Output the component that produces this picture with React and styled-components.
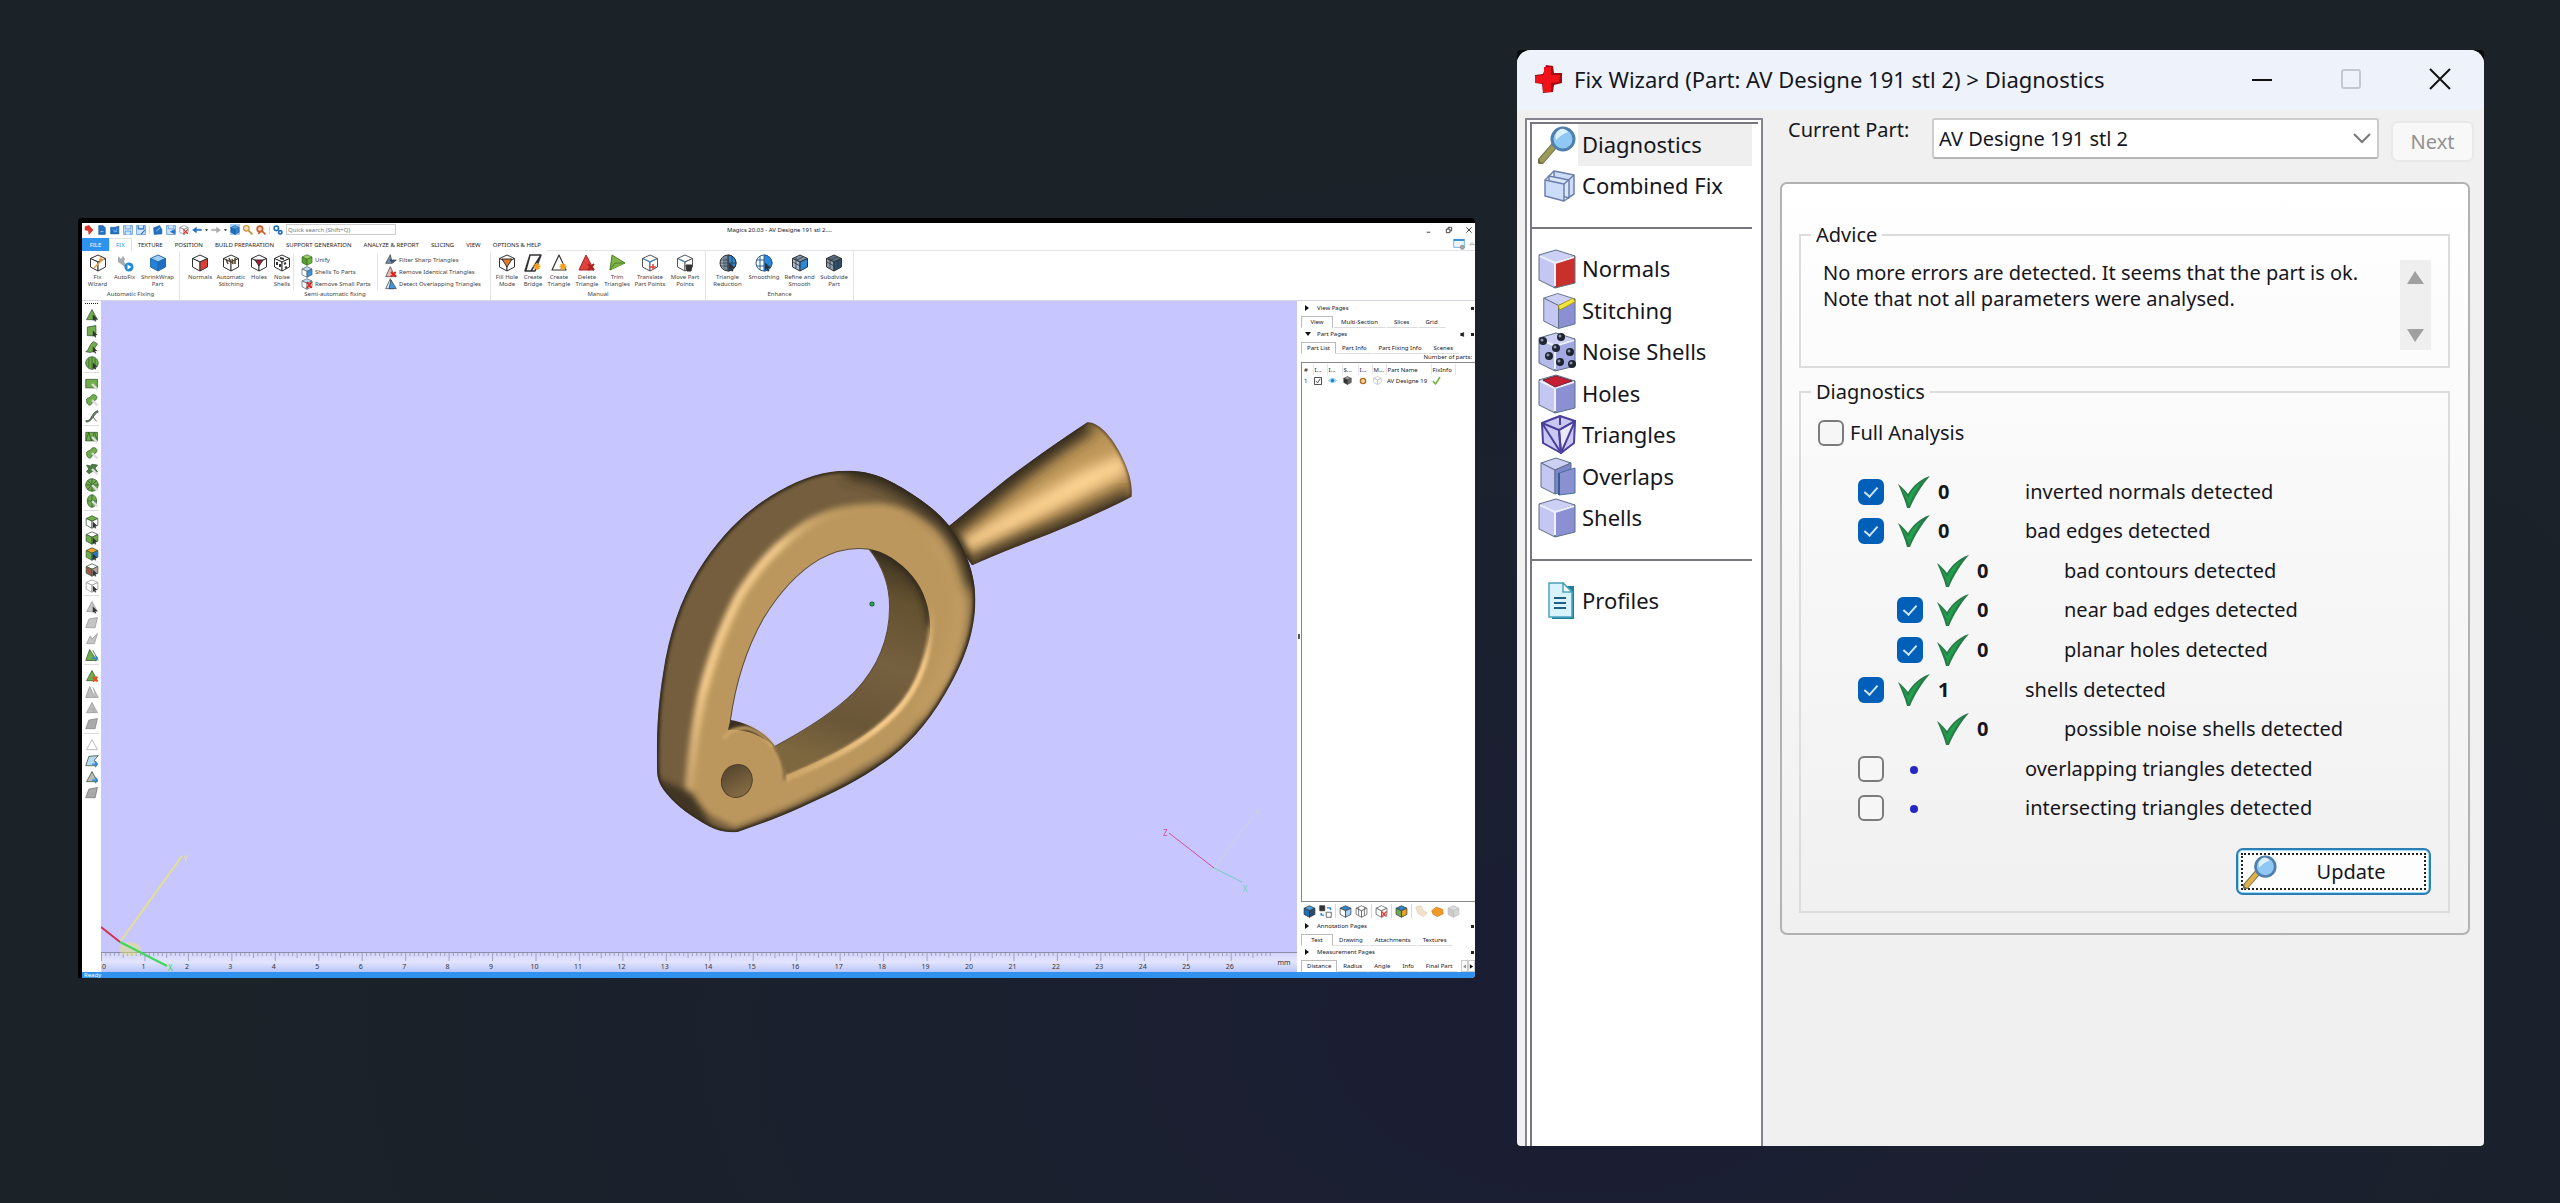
import styled, { createGlobalStyle } from 'styled-components';

const GlobalStyle = createGlobalStyle`
  * {
    box-sizing: border-box;
  }

  body {
    margin: 0;
    font-family: 'Noto Sans', 'Open Sans', sans-serif;
    color: #16161c;
    background: #1b2228;
  }

  button,
  input,
  select {
    font: inherit;
    color: inherit;
  }

  button {
    padding: 0;
    border: 0;
    background: none;
  }

  svg {
    display: block;
    flex: none;
  }
`;

const Desktop = styled.main`
  display: grid;
  grid-template-columns: minmax(0, 1397fr) minmax(0, 967fr);
  gap: 42px;
  align-items: start;
  min-height: 100vh;
  padding: 50px 76px 57px 78px;
  background: radial-gradient(ellipse at 62% 85%, #1b1d34 0%, #1b2030 25%, #1b2228 60%);
`;

/* ---------- shared drawings ---------- */

const Cube = ({ size = 18, top = '#fff', left = '#fff', right = '#fff', line = '#333', children }) => (
  <svg width={size} height={size} viewBox="0 0 18 18" stroke={line} strokeLinejoin="round" aria-hidden="true">
    <path d="M9 1 16.500 4.500 9 8 1.500 4.500Z" fill={top} />
    <path d="M1.500 4.500 9 8V17L1.500 13Z" fill={left} />
    <path d="M16.500 4.500 9 8V17L16.500 13Z" fill={right} />
    {children}
  </svg>
);

const Cursor = ({ color = '#333' }) => <path d="M10 8.500 16 14 13 14.300 14.500 17 12.800 17.500 11.800 15 10 16.500Z" fill={color} stroke="none" />;

const Star = () => <path d="M13 9v7M9.500 12.500h7M10.600 10.200l4.800 4.800M15.400 10.200l-4.800 4.800" stroke="#f3a11c" strokeWidth="1.600" />;

const Pic = ({ size = 18, line = '#333', fill = 'none', children }) => (
  <svg width={size} height={size} viewBox="0 0 18 18" stroke={line} fill={fill} strokeLinejoin="round" aria-hidden="true">
    {children}
  </svg>
);

/* ---------- Magics window ---------- */

const AppWindow = styled.section`
  margin-top: 168px;
  border: solid #000;
  border-width: 5px 0 0 4px;
  border-radius: 4px 4px 4px 0;
  background: #fff;
  overflow: hidden;
  font-size: 6px;
  line-height: 8px;
`;

const TitleRow = styled.header`
  display: grid;
  grid-template-columns: 645px auto 1fr;
  align-items: center;
  height: 15px;
  padding-bottom: 2px;
`;

const QuickBar = styled.div`
  display: flex;
  align-items: center;
  gap: 3px;
  padding-left: 2px;
`;

const QuickButton = styled.button`
  display: grid;
  place-items: center;
  width: 10px;
  height: 11px;
  background: ${({ $active }) => ($active ? '#a6cdf3' : 'none')};
`;

const Caret = styled.i`
  width: 3px;
  height: 2px;
  border: solid transparent;
  border-width: 2px 1px 0;
  border-top-color: #555;
`;

const Divider = styled.i`
  flex: none;
  width: 1px;
  height: ${({ $tall }) => ($tall ? '14px' : '8px')};
  background: #d8d8dc;
`;

const SearchInput = styled.input`
  width: 110px;
  height: 11px;
  padding: 0 1px;
  border: 1px solid #ccc;

  &::placeholder {
    color: #777;
  }
`;

const AppTitle = styled.h2`
  margin: 0;
  font-size: 6px;
  font-weight: 400;
`;

const AppControls = styled.div`
  display: flex;
  justify-content: flex-end;
  gap: 12px;
  padding-right: 2px;
`;

const RibbonTabs = styled.nav`
  display: flex;
  height: 13px;
  border-bottom: 1px solid #dfe1e6;
`;

const RibbonTab = styled.button`
  padding: 0 6px;
  height: 13px;
  color: ${({ $kind }) => ($kind === 'file' ? '#fff' : $kind === 'on' ? '#2f8fe6' : '#222')};
  background: ${({ $kind }) => ($kind === 'file' ? '#2f93ee' : '#fff')};
  border: ${({ $kind }) => ($kind === 'on' ? '1px solid #dfe1e6' : '0')};
  border-bottom: 0;
  min-width: ${({ $kind }) => ($kind === 'file' ? '27px' : $kind === 'on' ? '21px' : '0')};
`;

const TabTools = styled.div`
  display: flex;
  align-items: center;
  gap: 4px;
  margin-left: auto;
`;

const Ribbon = styled.div`
  display: flex;
  height: 50px;
  border-bottom: 1px solid #d5d5e4;
`;

const RibbonGroup = styled.section`
  display: flex;
  flex-direction: column;
  align-items: center;
  justify-content: space-between;
  width: ${({ $width }) => $width}px;
  padding: 3px 0 2px;
  border-right: 1px solid #e3e3e8;
`;

const GroupItems = styled.div`
  display: flex;
  align-items: flex-start;
`;

const GroupName = styled.h3`
  margin: 0;
  font-size: 6px;
  font-weight: 400;
  line-height: 8px;
  color: #444;
`;

const RibbonButton = styled.button`
  display: flex;
  flex-direction: column;
  align-items: center;
  gap: 2px;
  width: ${({ $width }) => $width}px;
  line-height: 7px;
  color: #444;
  white-space: pre;
`;

const SmallStack = styled.div`
  display: grid;
  align-content: start;
  width: ${({ $width }) => $width}px;
  padding-left: 7px;
  border-left: 1px solid #e3e3e8;
`;

const SmallButton = styled.button`
  display: flex;
  align-items: center;
  gap: 2px;
  height: 12px;
  color: #444;
  white-space: nowrap;
`;

const Workspace = styled.div`
  display: grid;
  grid-template-columns: 19px minmax(0, 1fr) 4px 174px;
`;

const ToolStrip = styled.div`
  display: flex;
  flex-direction: column;
  align-items: center;
  gap: 2px;
  padding-top: 2px;
`;

const Grip = styled.i`
  width: 13px;
  border-top: 1px dotted #222;
  margin-bottom: 2px;
`;

const StripRule = styled.i`
  width: 15px;
  height: 3px;
  border-top: 1px solid #ddd;
`;

const ToolButton = styled.button`
  width: 14px;
  height: 14px;
`;

const Splitter = styled.div`
  display: grid;
  place-items: center;

  &::after {
    content: '';
    width: 2px;
    height: 5px;
    background: #555;
  }
`;

const Scene = styled.svg`
  width: 100%;
  height: auto;
  background: #c8c6fe;
  font-size: 7px;
`;

const SidePanel = styled.aside`
  display: flex;
  flex-direction: column;
  padding-top: 1px;
  overflow: hidden;
`;

const PageHead = styled.div`
  display: flex;
  align-items: center;
  gap: 4px;
  height: 12px;
  padding: 0 0 0 4px;
`;

const Arrow = styled.i`
  width: 0;
  height: 0;
  margin-right: 2px;
  border: 3px solid transparent;
  ${({ $open }) => ($open
    ? 'border-top: 4px solid #111; border-bottom: 0;'
    : 'border-left: 4px solid #111; border-right: 0; margin-right: 4px;')}
`;

const Dots = styled.i`
  flex: 1;
  height: 3px;
  background: radial-gradient(#aaa 35%, transparent 50%) 0 0 / 2px 2px;
`;

const PinDot = styled.i`
  width: 3px;
  height: 3px;
  margin: 0 1px 0 2px;
  background: #222;
`;

const PageTabs = styled.div`
  display: flex;
  height: 14px;
  padding-top: 2px;
`;

const PageTab = styled.button`
  min-width: ${({ $on }) => ($on ? '32px' : '0')};
  padding: 0 ${({ $pad }) => $pad}px;
  border: ${({ $on }) => ($on ? '1px solid #bbb' : '1px solid transparent')};
  border-bottom: ${({ $on }) => ($on ? '1px solid #fff' : '1px solid #ddd')};
  white-space: nowrap;
`;

const TabArrows = styled.div`
  display: flex;
  margin-left: auto;

  button {
    display: grid;
    place-items: center;
    width: 7px;
    border: 1px solid #ccc;
  }
`;

const PartCount = styled.p`
  margin: 0;
  padding-right: 3px;
  line-height: 6px;
  text-align: right;
`;

const PartArea = styled.div`
  flex: 1;
  margin-top: 2px;
  border: 1px solid #888;
  border-right: 0;
  padding: 1px;
`;

const PartTable = styled.table`
  width: 152px;
  table-layout: fixed;
  border-collapse: collapse;

  th,
  td {
    height: 11px;
    padding: 0 1px;
    font-weight: 400;
    text-align: left;
    white-space: nowrap;
  }

  th {
    border-right: 1px solid #e5e5e5;
  }
`;

const PartTools = styled.div`
  display: flex;
  align-items: center;
  gap: 3px;
  height: 18px;
  padding-left: 2px;
`;

const StatusBar = styled.footer`
  height: 6px;
  padding-left: 2px;
  line-height: 6px;
  color: #fff;
  background: #3191ee;
`;

const quickIcons = [
  ['New', <Pic size={10} line="#c51f1a" fill="#e03228"><path d="M2 3 9 1 16 9 9 17 8 10 2 9Z" /></Pic>],
  ['Open', <Pic size={10} line="#1b5fa8" fill="#2270bf"><path d="M3 1H11L15 5V17H3Z" /><path d="M6 12h6" stroke="#fff" /></Pic>],
  ['Import', <Pic size={10} line="#1b5fa8" fill="#2270bf"><path d="M1 4H9L16 2V16H1Z" /><path d="M5 8 12 12M12 6v6H6" stroke="#9fd0ff" /></Pic>],
  ['Save', <Pic size={10} line="#2270bf" fill="#cfe5fa"><path d="M1 1H17V17H1Z" /><path d="M4 1v6h10V1M4 17v-6h10v6" /></Pic>],
  ['Save as', <Pic size={10} line="#2270bf" fill="#cfe5fa"><path d="M1 1H17V17H1Z" /><path d="M4 1v6h10V1M9 17l7-8" strokeWidth="2" /></Pic>],
  'rule',
  ['Load part', <Pic size={10} line="#1b5fa8" fill="#2270bf"><path d="M1 5 12 1 16 8 16 16 2 17Z" /><path d="M6 11 13 5" stroke="#fff" /></Pic>],
  ['Save part', <Pic size={10} line="#2270bf" fill="#cfe5fa"><path d="M1 1H17V17H1Z" /><path d="M4 1v6h10V1" /><path d="M8 12 16 8V16Z" fill="#2270bf" /></Pic>],
  ['Unload', <Cube size={10} line="#666"><path d="M8 8l8 8M16 8l-8 8" stroke="#d33" strokeWidth="2" /></Cube>],
  ['Undo', <Pic size={10} line="#2270bf" fill="#2270bf"><path d="M1 9 8 4V7.500H17V10H8V14Z" /></Pic>],
  'caret',
  ['Redo', <Pic size={10} line="#aaa" fill="#aaa"><path d="M17 9 10 4V7.500H1V10H10V14Z" /></Pic>],
  'caret',
  ['Shade', <Cube size={10} top="#4a9be0" left="#1f6fb8" right="#2f83cc" line="#1d5c9b" />, true],
  ['Zoom', <Pic size={10} line="#c98a35" fill="#f5dcae"><circle cx="6" cy="6" r="5" strokeWidth="2" /><path d="M10 10 17 17" strokeWidth="3" /></Pic>],
  ['Zoom part', <Pic size={10} line="#c9602f" fill="#f5c9ae"><circle cx="7" cy="7" r="5" strokeWidth="3" /><path d="M11 11 17 17M4 16l5-5" strokeWidth="3" /></Pic>],
  'rule',
  ['Find', <Pic size={10} line="#2270bf"><circle cx="6" cy="6" r="4" strokeWidth="3" /><circle cx="13" cy="13" r="3" strokeWidth="3" /></Pic>],
];

const tabs = ['TEXTURE', 'POSITION', 'BUILD PREPARATION', 'SUPPORT GENERATION', 'ANALYZE & REPORT', 'SLICING', 'VIEW', 'OPTIONS & HELP'];

const autoTools = [
  [26, 'Fix\nWizard', <Cube><path d="M5 14 14 5M12 3v5M10 5.500h5" stroke="#e5a23a" strokeWidth="1.500" /></Cube>],
  [28, 'AutoFix', (
    <Pic line="none">
      <path d="M2 2 5 5 7 2 9 5 8 8 13 13 11 15 5 10 2 8Z" fill="#a7aab2" />
      <circle cx="13" cy="13" r="4.500" fill="#1f8bd6" />
      <path d="M11.500 10.500 15.500 13 11.500 15.500Z" fill="#fff" />
    </Pic>
  )],
  [38, 'ShrinkWrap\nPart', <Cube top="#9fd0f7" left="#2482d8" right="#1f6fc0" line="#276cab" />],
];

const semiTools = [
  [30, 'Normals', <Cube right="#dc3f34" />],
  [32, 'Automatic\nStitching', <Cube><path d="M4 5l2 5M7 4l2 5M10 5l1 5M13 4v6" stroke="#5b4a35" strokeWidth="1.600" /></Cube>],
  [24, 'Holes', <Cube><path d="M5 6H13L9 12Z" fill="#a6192e" /></Cube>],
  [22, 'Noise\nShells', <Cube><path d="M4 8v3M7 10v3M11 10l2-1M12 14l2-1M7 4l4 1" strokeWidth="2" /></Cube>],
];

const manualTools = [
  [26, 'Fill Hole\nMode', <Cube><path d="M4 5H14L9 13Z" fill="#e07b2a" /></Cube>],
  [26, 'Create\nBridge', <Pic><path d="M6 1H17L11 17H1ZM6 1 2 16M6 1H17L7 17" strokeWidth="1.500" /><Star /></Pic>],
  [26, 'Create\nTriangle', <Pic><path d="M9 1 16 16H2Z" fill="#fff" strokeWidth="1.200" /><Star /></Pic>],
  [30, 'Delete\nTriangle', <Pic line="#a82320" fill="#e0433c"><path d="M8 1 16 16H1Z" /><path d="M10 10l6 6M16 10l-6 6" strokeWidth="2" /></Pic>],
  [30, 'Trim\nTriangles', <Pic line="#4c7d29" fill="#7fb54b"><path d="M4 1 17 9 2 16Z" /><path d="M2 16 7 9 17 9" /></Pic>],
  [36, 'Translate\nPart Points', <Cube line="#555"><path d="M9 8 3 5M9 8l6-3" stroke="#3b93dc" /><path d="M12 10v6M9 13h6" stroke="#e0433c" strokeWidth="1.500" /></Cube>],
  [34, 'Move Part\nPoints', <Cube line="#555"><path d="M9 8 3 5" stroke="#3b93dc" /><path d="M10 11h6l-1 6h-4Z" fill="#333" stroke="#333" /></Cube>],
];

const enhanceTools = [
  [38, 'Triangle\nReduction', (
    <Pic>
      <circle cx="9" cy="9" r="8" fill="#9db0c4" />
      <path d="M9 1a8 8 0 0 1 0 16Z" fill="#2b86d6" />
      <path d="M2 6h7M1 9h16M2 12h7M5 3v12M7 1v16M9 1v16M13 2v14" strokeWidth="0.700" />
      <Cursor />
    </Pic>
  )],
  [35, 'Smoothing', (
    <Pic line="#2a5f92">
      <circle cx="9" cy="9" r="8" fill="#fff" />
      <path d="M9 1a8 8 0 0 1 0 16Z" fill="#2b86d6" />
      <path d="M2 6h7M2 12h7M5 2v14" />
      <Cursor />
    </Pic>
  )],
  [36, 'Refine and\nSmooth', <Cube top="#7f95aa" left="#a8bccd" right="#2b86d6"><path d="M2 8 9 12M5 3v11M12 3 6 6" strokeWidth="0.800" /></Cube>],
  [33, 'Subdivide\nPart', <Cube top="#5a7186" left="#8fa1b1" right="#2c5070"><path d="M2 8 9 12M5 3v11M13 6v8M12 3 6 6" strokeWidth="0.800" /></Cube>],
];

const fixLists = [
  [84, [
    ['Unify', <Cube size={12} top="#9bd064" left="#5a9a32" right="#71b142" line="#39691d" />],
    ['Shells To Parts', <Cube size={12} top="#bcdcf8" left="#fff" right="#3c92df" line="#456" />],
    ['Remove Small Parts', <Cube size={12} top="#bcdcf8" line="#456"><path d="M9 6l7 9M16 6l-7 9" stroke="#d8261f" strokeWidth="3" /></Cube>],
  ]],
  [108, [
    ['Filter Sharp Triangles', <Pic size={12} fill="#6d92b5"><path d="M8 1 11 14H1Z" /><path d="M7 9H17L12 13Z" fill="#46637d" /></Pic>],
    ['Remove Identical Triangles', <Pic size={12} fill="#e9b5b2"><path d="M8 1 15 16H1Z" /><path d="M9 9l8 7M16 9l-7 7" stroke="#d8261f" strokeWidth="3" /></Pic>],
    ['Detect Overlapping Triangles', <Pic size={12} fill="#cfe5fa"><path d="M8 1 13 16H1Z" /><path d="M9 3 17 16H6Z" fill="#3f97dd" /></Pic>],
  ]],
];

const green = '#6fae4a';
const tri = 'M9 2 16 15H2Z';
const quad = 'M5 4 16 2 13 15H1Z';
const blob = 'M2 10C1 6 6 7 8 4 10 0 17 3 15 7 14 11 9 9 9 13 7 18 2 15 2 10Z';

const stripTools = [
  ['Mark triangle', tri, green, 'cursor'],
  ['Mark plane', 'M3 4 14 2V15H3Z', green, 'cursor'],
  ['Mark surface', 'M1 15C5 14 5 6 11 2L16 5C13 8 12 15 7 16Z', green, 'cursor'],
  ['Mark shell', 'M9 1A8 8 0 1 1 8.900 1ZM5 3V15M9 1v16M13 3V15', green, 'cursor'],
  null,
  ['Rectangle mark', 'M1 3H16V14H1Z', green, 'lens'],
  ['Freeform mark', blob, green, 'lens'],
  ['Curve mark', 'M1 15C9 16 7 6 16 2L17 4C10 7 10 16 2 17ZM10 10 15 16', '#777'],
  null,
  ['Window triangles', 'M1 3H16V14H1ZM1 14 5 3 8 14 12 3 16 14', green, 'lens'],
  ['Freeform triangles', blob, green, 'lens'],
  ['Brush mark', 'M2 4 7 5 9 3 16 4 13 8 16 13 10 12 5 15 2 12 5 9Z', '#4b7f3e', 'lens'],
  ['Sphere mark', 'M9 1A8 8 0 1 1 8.900 1ZM9 1V17M1 9H17M3 3 15 15M15 3 3 15', green, 'lens'],
  ['Ellipse mark', 'M9 1A6 8 0 1 1 8.900 1ZM9 1V17M3 9H15', green, 'lens'],
  null,
  ['Mark top', 'cube', [green, '#fff', '#fff'], 'cursor'],
  ['Mark sides', 'cube', ['#fff', green, green], 'cursor'],
  ['Mark colour', 'cube', ['#eba12a', green, '#2b76bd'], 'cursor'],
  ['Mark holes', 'cube', ['#fff', '#9c5a52', '#b9a09c'], 'cursor'],
  ['Unmark all', 'cube', ['#fff', '#fff', '#fff'], 'cursor', '#999'],
  null,
  ['Expand', tri, '#c4c4c4', 'cursor', '#999'],
  ['Shrink', quad, '#c4c4c4', '', '#999'],
  ['Invert', 'M2 15 7 5 9 9 16 2 12 15Z', '#c4c4c4', '', '#999'],
  ['Connect', 'M6 2 15 16H1ZM10 3 17 16', green, 'blue'],
  null,
  ['Delete marked', tri, green, 'cross'],
  ['Hide marked', 'M6 2 13 16H1ZM10 3 17 16H13', '#bdbdbd', '', '#999'],
  ['Separate', 'M9 2 16 15H2ZM9 9 12 15', '#bdbdbd', '', '#999'],
  ['Offset', quad, '#aaa', '', '#888'],
  null,
  ['Empty', tri, '#fff', '', '#aaa'],
  ['Swap', 'M5 3 17 2 12 8 15 15H1Z', '#b6d7f6', 'blue'],
  ['Copy', tri, '#bbb', 'blue'],
  ['Extrude', quad, '#a9a9a9', '', '#777'],
];

const Badge = ({ kind }) => {
  if (kind === 'cursor') return <Cursor />;
  if (kind === 'lens') return <path d="M9 9 16 16" stroke="#ddd" strokeWidth="3" />;
  if (kind === 'cross') return <path d="M10 10l6 6M16 10l-6 6" stroke="#e5501f" strokeWidth="2.500" />;
  if (kind === 'blue') return <path d="M9 13H16L13 9M16 13 13 17" stroke="#2b86d6" strokeWidth="1.500" fill="none" />;
  return null;
};

const StripIcon = ({ shape, fill, badge, line = '#3a5a33' }) =>
  shape === 'cube' ? (
    <Cube size={14} top={fill[0]} left={fill[1]} right={fill[2]} line={line}><Badge kind={badge} /></Cube>
  ) : (
    <Pic size={14} line={line} fill={fill}><path d={shape} /><Badge kind={badge} /></Pic>
  );

const RibbonTools = ({ items }) => items.map(([width, label, icon]) => (
  <RibbonButton key={label} $width={width}>{icon}{label}</RibbonButton>
));

/* outline of the ring, its opening and the inner wall */
const ringPath = 'M80 1110C78 1000 82 920 98 820C115 700 150 600 200 515C270 400 350 325 440 274C510 232 580 212 640 212C720 212 765 240 810 266C870 303 910 335 945 378C990 440 1022 520 1022 600C1020 700 990 775 950 850C900 945 840 1020 775 1070C690 1135 610 1175 510 1220C440 1252 380 1275 318 1296C290 1300 262 1294 235 1280C180 1248 140 1220 112 1185C90 1160 80 1140 80 1110Z';
const holePath = 'M708 448C660 440 610 450 560 478C490 520 440 580 395 655C345 745 312 850 297 962C340 975 395 1000 427 1040C520 990 600 940 665 875C730 805 768 720 768 620C768 550 745 495 708 448Z';
const wallPath = 'M703 446C750 452 800 485 835 528C870 570 887 625 888 680C884 780 840 870 780 935C710 1005 620 1060 456 1128C455 1100 445 1065 425 1040C520 990 600 940 665 875C730 805 768 720 768 620C768 550 745 495 703 446Z';
const ridgePath = 'M172 1180C180 1080 192 985 212 890C240 775 275 680 325 585C380 495 440 430 520 375C575 342 620 325 700 318';
const conePath = 'M935 385C1040 300 1100 245 1180 188Q1260 130 1353 67C1385 66 1420 105 1445 150C1475 205 1488 250 1484 290Q1370 350 1240 402Q1110 452 1012 496Z';

const unit = 43.45;
const ticks = Array.from({ length: 270 }, (_, i) => i);

const Axes = ({ x, y, ends, width, opacity }) => (
  <g strokeWidth={width} opacity={opacity}>
    {ends.map(([dx, dy, color, name, tx, ty]) => (
      <g key={color}>
        <path d={`M${x} ${y}L${dx} ${dy}`} stroke={color} />
        {name && <text x={tx} y={ty} fill={color} stroke="none" fontSize="8">{name}</text>}
      </g>
    ))}
  </g>
);

const PartScene = () => (
  <Scene viewBox="101 301 1196 671" role="img" aria-label="Part view">
    <defs>
      <filter id="soft" x="-20%" y="-20%" width="140%" height="140%"><feGaussianBlur stdDeviation="9" /></filter>
      <filter id="softer" x="-20%" y="-20%" width="140%" height="140%"><feGaussianBlur stdDeviation="20" /></filter>
      <filter id="fine" x="-20%" y="-20%" width="140%" height="140%"><feGaussianBlur stdDeviation="5" /></filter>
      <clipPath id="ringClip"><path d={ringPath} /></clipPath>
      <clipPath id="wallClip"><path d={wallPath} /></clipPath>
      <clipPath id="coneClip"><path d={conePath} /></clipPath>
      <linearGradient id="ridgeFade" gradientUnits="userSpaceOnUse" x1="170" y1="1180" x2="700" y2="300">
        <stop offset="0" stopColor="#ffd595" stopOpacity="0.3" />
        <stop offset="0.3" stopColor="#ffd595" />
        <stop offset="0.75" stopColor="#ffd595" />
        <stop offset="1" stopColor="#c59e60" stopOpacity="0" />
      </linearGradient>
      <linearGradient id="innerFade" gradientUnits="userSpaceOnUse" x1="890" y1="600" x2="500" y2="1130">
        <stop offset="0" stopColor="#d9b074" stopOpacity="0" />
        <stop offset="0.25" stopColor="#f0c586" />
        <stop offset="0.6" stopColor="#f7cb8b" />
        <stop offset="1" stopColor="#cfa76a" />
      </linearGradient>
      <linearGradient id="wallFill" gradientUnits="userSpaceOnUse" x1="760" y1="450" x2="560" y2="1080">
        <stop offset="0" stopColor="#3c3122" />
        <stop offset="0.2" stopColor="#63512f" />
        <stop offset="0.5" stopColor="#75603f" />
        <stop offset="0.8" stopColor="#6a5738" />
        <stop offset="1" stopColor="#7d673f" />
      </linearGradient>
      <linearGradient id="pinFill" x1="0" y1="0" x2="1" y2="1">
        <stop offset="0" stopColor="#4e3f2b" />
        <stop offset="1" stopColor="#8f7448" />
      </linearGradient>
      <linearGradient id="rulerFill" x1="0" y1="0" x2="0" y2="1">
        <stop offset="0" stopColor="#d3d2fd" />
        <stop offset="0.5" stopColor="#e3e4fd" />
        <stop offset="1" stopColor="#b9c6f9" />
      </linearGradient>
    </defs>

    <g transform="translate(630 400) scale(0.338 0.3333)" fill="none">
      <g clipPath="url(#coneClip)">
        <path d={conePath} fill="#a27e4a" />
        <path d="M960 440 1290 130 1480 60 1500 220 1010 465Z" fill="#bd9659" filter="url(#softer)" />
        <path d="M975 425 1330 215 1460 160 1475 215 1330 290 1005 455Z" fill="#ffd494" filter="url(#softer)" />
        <path d="M935 385C1040 300 1100 245 1180 188Q1260 130 1353 67" stroke="#33291c" strokeWidth="62" filter="url(#softer)" />
        <path d="M1484 292Q1370 350 1240 402Q1110 452 1012 496" stroke="#33291c" strokeWidth="46" filter="url(#softer)" />
        <path d={conePath} stroke="#33291d" strokeWidth="6" filter="url(#fine)" />
        <path d="M935 375Q990 430 1010 505" stroke="#33291d" strokeWidth="20" filter="url(#soft)" />
      </g>

      <g clipPath="url(#ringClip)">
        <path d={ringPath} fill="#745e3e" />
        <path d={`${ridgePath}C840 305 930 400 960 500C1010 600 985 720 940 830C850 980 780 1050 680 1100C560 1180 440 1230 310 1275L240 1240Z`} fill="#bb975d" stroke="#bb975d" strokeWidth="14" filter="url(#soft)" />
        <path d="M880 380C960 460 990 560 988 620C980 740 930 850 860 950" stroke="#c59f63" strokeWidth="30" filter="url(#softer)" />
        <path d={ridgePath} stroke="url(#ridgeFade)" strokeWidth="22" filter="url(#soft)" />
        <path d="M640 205C720 205 765 235 810 260C870 297 920 335 960 385C1000 440 1025 500 1028 560" stroke="#33291d" strokeWidth="62" filter="url(#softer)" />
        <path d="M80 1135C100 1180 150 1235 240 1285L185 1180Z" fill="#33291d" opacity="0.8" filter="url(#soft)" />
        <path d={ringPath} stroke="#33291d" strokeWidth="14" filter="url(#fine)" />
      </g>

      <path d={wallPath} fill="url(#wallFill)" />
      <path d="M703 446C750 452 800 485 835 528C870 570 887 625 888 680" stroke="#2f261a" strokeWidth="18" filter="url(#soft)" clipPath="url(#wallClip)" />
      <path d="M893 620C895 780 845 875 785 938C715 1010 620 1070 462 1136" stroke="url(#innerFade)" strokeWidth="17" strokeLinecap="round" filter="url(#fine)" />
      <path d={holePath} fill="#c8c6fe" stroke="#5c4b33" strokeWidth="3" />
      <path d="M297 960C350 968 405 1000 430 1042C395 1010 345 985 290 990Z" fill="#3a2f20" />
      <path d="M276 1016C290 1000 300 985 345 984C400 998 445 1050 458 1140" stroke="#d0a768" strokeWidth="10" filter="url(#fine)" />
      <path d="M425 1040C447 1070 457 1100 457 1142" stroke="#4e3f2b" strokeWidth="5" filter="url(#fine)" />
      <ellipse cx="316" cy="1143" rx="45" ry="50" fill="url(#pinFill)" stroke="#4e3f2b" strokeWidth="3" transform="rotate(20 316 1143)" />
      <circle cx="716" cy="612" r="6" fill="#2faa5c" stroke="#14602f" strokeWidth="3" />
    </g>

    <rect x="101" y="952" width="1196" height="20" fill="url(#rulerFill)" />
    <path d="M101 952.500H1297" stroke="#8d8da8" />
    <path
      d={ticks.map((i) => `M${101.5 + (i * unit) / 10} 953v${i % 10 === 0 ? 8 : i % 5 === 0 ? 5 : 3}`).join('')}
      stroke="#8a8aa3"
      strokeWidth="0.700"
    />
    <g fill="#333" textAnchor="middle">
      {Array.from({ length: 27 }, (_, i) => (
        <text key={i} x={i === 0 ? 104 : 100 + i * unit} y="969">{i}</text>
      ))}
      <text x="1284" y="965">mm</text>
    </g>

    <ellipse cx="130" cy="949" rx="11" ry="7" fill="#e8e86a" opacity="0.45" />
    <Axes x={120} y={942} width={2} ends={[
      [182, 856, '#e3e08f', 'Y', 183, 862],
      [101, 927, '#cf3054'],
      [167, 966, '#3fd65a', 'X', 168, 971],
    ]} />
    <Axes x={1214} y={868} width={1} opacity={0.9} ends={[
      [1253, 817, '#d3d3cc', 'Y', 1255, 817],
      [1169, 833, '#d2408c', 'Z', 1163, 836],
      [1242, 882, '#5fd6a8', 'X', 1243, 892],
    ]} />
  </Scene>
);

const PageSection = ({ title, open, items, pad = 5, arrows }) => (
  <>
    <PageHead>
      <Arrow $open={open} />
      {title}
      <Dots />
      {open && <Pic size={5}><path d="M2 4H8L14 1V17L8 14H2Z" fill="#222" /></Pic>}
      <PinDot />
    </PageHead>
    <PageTabs>
      {items.map((item, i) => <PageTab key={item} $on={i === 0} $pad={pad}>{item}</PageTab>)}
      {arrows && (
        <TabArrows>
          <button aria-label="Previous tab"><Pic size={5} line="none" fill="#888"><path d="M14 2V16L4 9Z" /></Pic></button>
          <button aria-label="Next tab"><Pic size={5} line="none" fill="#111"><path d="M3 1V17L15 9Z" /></Pic></button>
        </TabArrows>
      )}
    </PageTabs>
  </>
);

const PartList = () => (
  <PartArea>
    <PartTable>
      <colgroup>
        {[10, 14, 15, 16, 14, 14, 45, 24].map((w, i) => <col key={i} width={w} />)}
      </colgroup>
      <thead>
        <tr>
          {['#', 'I...', 'I...', 'S...', 'I...', 'M...', 'Part Name', 'FixInfo'].map((h, i) => <th key={i}>{h}</th>)}
        </tr>
      </thead>
      <tbody>
        <tr>
          <td>1</td>
          <td><Pic size={8}><path d="M1 1H17V17H1ZM4 9 8 13 14 4" strokeWidth="2" /></Pic></td>
          <td><Pic size={9} line="#2b9de0" fill="#bfe4fa"><path d="M1 9Q9 1 17 9 9 17 1 9Z" /><circle cx="9" cy="9" r="3" fill="#1272b5" /></Pic></td>
          <td><Cube size={9} top="#999" left="#333" right="#666" /></td>
          <td><Pic size={8} line="#b06a1f" fill="#f4d3a0"><circle cx="9" cy="9" r="6" strokeWidth="3" /></Pic></td>
          <td><Cube size={9} line="#aaa" /></td>
          <td>AV Designe 19</td>
          <td><Pic size={9} line="#6cb33f"><path d="M2 10 7 16 16 2" strokeWidth="3" /></Pic></td>
        </tr>
      </tbody>
    </PartTable>
  </PartArea>
);

const MagicsWindow = () => (
  <AppWindow>
    <TitleRow>
      <QuickBar>
        {quickIcons.map((item, i) => {
          if (item === 'rule') return <Divider key={i} />;
          if (item === 'caret') return <Caret key={i} />;
          return <QuickButton key={i} aria-label={item[0]} $active={item[2]}>{item[1]}</QuickButton>;
        })}
        <SearchInput aria-label="Quick search" placeholder="Quick search (Shift+Q)" />
      </QuickBar>
      <AppTitle>Magics 20.03 - AV Designe 191 stl 2....</AppTitle>
      <AppControls>
        <button aria-label="Minimize"><Pic size={8}><path d="M4 14h8" strokeWidth="2" /></Pic></button>
        <button aria-label="Restore"><Pic size={8}><path d="M3 7H11V15H3ZM7 7V3H15V11H11" strokeWidth="2" /></Pic></button>
        <button aria-label="Close"><Pic size={8}><path d="M3 3 15 15M15 3 3 15" strokeWidth="2" /></Pic></button>
      </AppControls>
    </TitleRow>

    <RibbonTabs>
      <RibbonTab $kind="file">FILE</RibbonTab>
      <RibbonTab $kind="on">FIX</RibbonTab>
      {tabs.map((tab) => <RibbonTab key={tab}>{tab}</RibbonTab>)}
      <TabTools>
        <Pic size={12} line="#3b93dc" fill="#eef5fb"><path d="M1 2H17V14H1Z" /><path d="M1 3H17" strokeWidth="3" /><circle cx="14" cy="14" r="3" fill="#aaa" stroke="#777" /></Pic>
        <Pic size={6}><path d="M2 11H16L9 5Z" /></Pic>
      </TabTools>
    </RibbonTabs>

    <Ribbon>
      <RibbonGroup $width={98}>
        <GroupItems><RibbonTools items={autoTools} /></GroupItems>
        <GroupName>Automatic Fixing</GroupName>
      </RibbonGroup>
      <RibbonGroup $width={311}>
        <GroupItems>
          <RibbonTools items={semiTools} />
          {fixLists.map(([width, rows]) => (
            <SmallStack key={width} $width={width}>
              {rows.map(([label, icon]) => <SmallButton key={label}>{icon}{label}</SmallButton>)}
            </SmallStack>
          ))}
        </GroupItems>
        <GroupName>Semi-automatic fixing</GroupName>
      </RibbonGroup>
      <RibbonGroup $width={215}>
        <GroupItems><RibbonTools items={manualTools} /></GroupItems>
        <GroupName>Manual</GroupName>
      </RibbonGroup>
      <RibbonGroup $width={148}>
        <GroupItems><RibbonTools items={enhanceTools} /></GroupItems>
        <GroupName>Enhance</GroupName>
      </RibbonGroup>
    </Ribbon>

    <Workspace>
      <ToolStrip>
        <Grip />
        {stripTools.map((tool, i) => (tool ? (
          <ToolButton key={i} aria-label={tool[0]}>
            <StripIcon shape={tool[1]} fill={tool[2]} badge={tool[3]} line={tool[4]} />
          </ToolButton>
        ) : <StripRule key={i} />))}
      </ToolStrip>
      <PartScene />
      <Splitter />
      <SidePanel>
        <PageSection title="View Pages" pad={7} items={['View', 'Multi-Section', 'Slices', 'Grid']} />
        <PageSection title="Part Pages" open items={['Part List', 'Part Info', 'Part Fixing Info', 'Scenes']} />
        <PartCount>Number of parts:</PartCount>
        <PartList />
        <PartTools>
          <Cube size={13} top="#4a9be0" left="#1f6fb8" right="#2b4d6b" />
          <Pic size={13}><path d="M1 1H8V8H1Z" fill="#333" /><path d="M10 10H17V17H10Z" /><path d="M11 4h5v3M7 14H3V11" stroke="#2b86d6" strokeWidth="2" /></Pic>
          <Divider $tall />
          <Cube size={13} top="#2b86d6" right="#a8d0f4" />
          <Cube size={13} line="#555"><path d="M5 3v12M13 3v12" /></Cube>
          <Divider $tall />
          <Cube size={13} line="#555"><path d="M9 9l7 7M16 9l-7 7" stroke="#e0433c" strokeWidth="2" /></Cube>
          <Divider $tall />
          <Cube size={13} top="#2b86d6" left={green} right="#eba12a" />
          <Divider $tall />
          <Pic size={13} line="#d8cbb3" fill="#efe2cb"><path d="M1 3 8 1 12 8 17 11 12 16 4 11Z" /></Pic>
          <Pic size={13} line="#c87a14" fill="#f09a2a"><path d="M1 8 7 3 16 6 17 12 9 16 3 13Z" /></Pic>
          <Cube size={13} top="#ddd" left="#ccc" right="#d5d5d5" line="#bbb" />
        </PartTools>
        <PageSection title="Annotation Pages" items={['Text', 'Drawing', 'Attachments', 'Textures']} />
        <PageSection title="Measurement Pages" arrows items={['Distance', 'Radius', 'Angle', 'Info', 'Final Part']} />
      </SidePanel>
    </Workspace>
    <StatusBar>Ready</StatusBar>
  </AppWindow>
);

/* ---------- Fix Wizard dialog ---------- */

const DialogBack = styled.div`
  background: #07090b;
  border-radius: 4px;
`;

const Dialog = styled.section`
  display: flex;
  flex-direction: column;
  min-height: calc(100vh - 107px);
  border-radius: 14px 14px 4px 4px;
  background: #f0f0f0;
  overflow: hidden;
  font-size: 20px;
  line-height: 26px;
`;

const DialogBar = styled.header`
  display: flex;
  align-items: center;
  height: 60px;
  padding: 0 32px 2px 17px;
  background: #eef3fb;
`;

const DialogTitle = styled.h1`
  flex: 1;
  margin: 0 0 0 11px;
  font-size: 22px;
  font-weight: 400;
`;

const DialogControls = styled.div`
  display: flex;
  gap: 65px;
`;

const DialogBody = styled.div`
  flex: 1;
  display: grid;
  grid-template-columns: 238px minmax(0, 1fr);
  gap: 17px;
  padding: 8px 10px 0 8px;
`;

const StepFrame = styled.div`
  display: flex;
  padding: 2px 3px 0;
  border: 2px solid #85858f;
  border-bottom: 0;
  background: #fff;
`;

const StepList = styled.nav`
  flex: 1;
  border: solid #77777f;
  border-width: 2px 0 0 2px;
`;

const StepGrid = styled.div`
  display: grid;
  grid-template-rows: repeat(12, 1fr);
  height: 498px;
  padding-right: 6px;
`;

const StepButton = styled.button`
  display: grid;
  grid-template-columns: 46px 1fr;
  align-items: center;
  font-size: 22px;
  text-align: left;
`;

const StepIcon = styled.span`
  display: grid;
  justify-items: end;
  padding-right: 2px;
`;

const StepLabel = styled.span`
  align-self: stretch;
  display: flex;
  align-items: center;
  padding: 0 0 2px 4px;
  background: ${({ $current }) => ($current ? '#efefef' : 'none')};
`;

const StepRule = styled.hr`
  align-self: center;
  width: 100%;
  margin: 0;
  border: 0;
  border-top: 2px solid #77777f;
`;

const Settings = styled.div`
  display: flex;
  flex-direction: column;
  gap: 20px;
`;

const PartRow = styled.div`
  display: flex;
  align-items: flex-start;
`;

const PartLabel = styled.label`
  width: 152px;
  padding-left: 8px;
  line-height: 24px;
`;

const SelectBox = styled.div`
  position: relative;
  flex: 1;

  svg {
    position: absolute;
    top: 15px;
    right: 8px;
    pointer-events: none;
  }
`;

const PartSelect = styled.select`
  appearance: none;
  display: block;
  width: 100%;
  height: 41px;
  padding: 0 5px;
  border: 2px solid #ccc;
  border-bottom-color: #b5b5b5;
  border-radius: 3px;
  background: #fff;
`;

const NextButton = styled.button`
  width: 83px;
  height: 41px;
  margin: 3px 0 0 12px;
  border: 2px solid #e9e9e9;
  border-radius: 7px;
  color: #929292;
  background: #f8f8f8;
`;

const TabPage = styled.div`
  display: flex;
  flex-direction: column;
  gap: 11px;
  margin-right: 4px;
  padding: 38px 18px 20px 17px;
  border: 2px solid #b2b2b2;
  border-radius: 7px;
  background: linear-gradient(#fff, #f0f0f0);
`;

const Group = styled.fieldset`
  min-width: 0;
  margin: 0;
  padding: ${({ $top }) => $top}px 17px 16px 10px;
  border: 2px solid #dcdcdc;
`;

const GroupLegend = styled.legend`
  padding: 0 5px;
`;

const Advice = styled.div`
  display: flex;
  justify-content: space-between;
  height: 90px;
  padding-left: 12px;
`;

const AdviceText = styled.p`
  margin: 0;
`;

const ScrollTrack = styled.div`
  display: flex;
  flex-direction: column;
  justify-content: space-between;
  align-items: center;
  width: 31px;
  padding: 11px 0 8px;
  background: #efefef;
`;

const CheckLine = styled.div`
  display: flex;
  align-items: center;
  gap: 6px;
  height: 26px;
  margin: 0 0 26px 7px;
`;

const Check = styled.input`
  appearance: none;
  display: grid;
  place-items: center;
  width: 26px;
  height: 26px;
  margin: 0;
  border: 2px solid #7b7b7b;
  border-radius: 6px;
  background: #f6f6f6;

  &:checked {
    border-color: #005fb8;
    background: #005fb8;
  }

  &:checked::after {
    content: '';
    width: 6px;
    height: 11px;
    margin-bottom: 3px;
    border: solid #cfe4f7;
    border-width: 0 2px 2px 0;
    transform: rotate(42deg);
  }
`;

const ResultList = styled.ul`
  display: grid;
  grid-template-rows: repeat(9, 1fr);
  height: 356px;
  margin: 0;
  padding: 0 0 0 47px;
  list-style: none;
`;

const ResultRow = styled.li`
  display: grid;
  grid-template-columns: 39px 41px 87px 1fr;
  align-items: center;
  padding-left: ${({ $nested }) => ($nested ? '39px' : '0')};
`;

const Count = styled.b`
  grid-column: 3;
`;

const Mark = styled.span`
  grid-column: 2;
`;

const ResultName = styled.label`
  grid-column: 4;
`;

const UpdateButton = styled.button`
  display: block;
  width: 195px;
  height: 47px;
  margin: 20px 0 0 auto;
  padding: 3px;
  border: 2px solid #2c7fb4;
  border-radius: 7px;
  background: #fdfdfd;
  box-shadow: inset 0 0 0 1px #9fdcf7;
`;

const UpdateFocus = styled.span`
  display: grid;
  grid-template-columns: 35px 1fr;
  align-items: center;
  height: 100%;
  border: 2px dotted #222;
`;

const Lens = ({ size = 38, handle = '#9c9a58' }) => (
  <svg width={size} height={size} viewBox="0 0 38 38" aria-hidden="true">
    <path d="M16 20 3 35" stroke="#6f6f4c" strokeWidth="7" strokeLinecap="round" />
    <path d="M16 20 4 34" stroke={handle} strokeWidth="5" strokeLinecap="round" />
    <circle cx="25" cy="13" r="11" fill="#8fc8f3" stroke="#4f7fae" strokeWidth="3" />
    <path d="M18 14a7 8 0 0 1 12-8Q24 8 18 14Z" fill="#def1fd" />
  </svg>
);

const Block = ({ top = '#ccd0f4', left = '#c3c7f2', right = '#8a90d2', children }) => (
  <svg width="38" height="40" viewBox="0 0 38 40" stroke="#5d6f86" strokeLinejoin="round" aria-hidden="true">
    <path d="M1 6 18 1 37 7 17 14Z" fill={top} />
    <path d="M1 6 17 14V39L1 31Z" fill={left} />
    <path d="M37 7 17 14V39L37 34Z" fill={right} />
    <path d="M2 7 17 14 36 8M17 14V37" stroke="#eef0ff" strokeWidth="2" fill="none" />
    {children}
  </svg>
);

const knobs = [[5, 9], [23, 5], [18, 16], [11, 24], [32, 20], [22, 30], [34, 32]];

const steps = [
  ['Diagnostics', <Lens />],
  ['Combined Fix', (
    <svg width="32" height="34" viewBox="0 0 32 34" stroke="#6b7fae" strokeWidth="1.500" strokeLinejoin="round" aria-hidden="true">
      <path d="M10 2 30 6V25L24 29 10 20Z" fill="#cfdcf8" />
      <path d="M5 7 25 11V29L5 24Z" fill="#dbe6fb" />
      <path d="M1 11 20 15V32L1 27Z" fill="#cddcf8" />
      <path d="M1 11 10 2M20 15 30 6M20 32 30 25" />
    </svg>
  )],
  null,
  ['Normals', <Block right="#c9302c" />],
  ['Stitching', (
    <svg width="35" height="38" viewBox="0 0 38 40" stroke="#5d6f86" strokeLinejoin="round" aria-hidden="true">
      <path d="M3 6 18 1 37 7 19 14Z" fill="#ccd0f4" />
      <path d="M3 6 19 14V39L3 31Z" fill="#c3c7f2" />
      <path d="M37 7 19 14V39L37 34Z" fill="#8a90d2" />
      <path d="M19 14 35 6 37 10 24 17 20 19Z" fill="#f4e53c" stroke="#a39220" />
    </svg>
  )],
  ['Noise Shells', (
    <Block left="#b4bbea" right="#a1a9e0">
      {knobs.map(([x, y]) => (
        <g key={`${x}-${y}`} stroke="none">
          <circle cx={x} cy={y} r="4" fill="#1e2430" />
          <circle cx={x - 1} cy={y - 1} r="1.500" fill="#8b94a8" />
        </g>
      ))}
    </Block>
  )],
  ['Holes', <Block><path d="M5 6 18 2 34 7 17 13Z" fill="#c51f34" stroke="#7d1f30" /></Block>],
  ['Triangles', (
    <svg width="35" height="40" viewBox="0 0 35 40" stroke="#4b3f9c" strokeWidth="2" strokeLinejoin="round" fill="none" aria-hidden="true">
      <path d="M1 8 19 1 34 6 33 28 20 38 2 28Z" fill="#c9c8f3" />
      <path d="M34 6 20 38 18 15Z" fill="#e9e9fc" />
      <path d="M1 8 18 15 34 6M18 15 20 38M1 8 20 38M19 1V10" />
    </svg>
  )],
  ['Overlaps', (
    <svg width="36" height="40" viewBox="0 0 36 40" stroke="#5d6f86" strokeLinejoin="round" aria-hidden="true">
      <path d="M1 6 16 1 31 6 15 13Z" fill="#ccd0f4" />
      <path d="M1 6 15 13V37L1 30Z" fill="#c3c7f2" />
      <path d="M31 6 15 13V37L31 32Z" fill="#7d86c9" />
      <path d="M19 16 35 11V36L19 38Z" fill="#8a90d2" stroke="#46719f" />
      <path d="M19 16V38" stroke="#33608f" strokeWidth="2" />
    </svg>
  )],
  ['Shells', <Block />],
  null,
  ['Profiles', (
    <svg width="28" height="38" viewBox="0 0 28 38" aria-hidden="true">
      <path d="M4 4H26V37H4Z" fill="#1f7f9c" />
      <path d="M1 1H15L24 10V35H1Z" fill="#d8f3fb" stroke="#4aa3bd" strokeWidth="1.500" />
      <path d="M15 1V10H24Z" fill="#fff" stroke="#4aa3bd" strokeWidth="1.500" />
      <path d="M6 16H18M6 21H18M6 26H18" stroke="#1f5f86" strokeWidth="2" />
    </svg>
  )],
];

const results = [
  { name: 'inverted normals detected', count: 0, checked: true },
  { name: 'bad edges detected', count: 0, checked: true },
  { name: 'bad contours detected', count: 0, nested: true },
  { name: 'near bad edges detected', count: 0, checked: true, nested: true },
  { name: 'planar holes detected', count: 0, checked: true, nested: true },
  { name: 'shells detected', count: 1, checked: true },
  { name: 'possible noise shells detected', count: 0, nested: true },
  { name: 'overlapping triangles detected', checked: false },
  { name: 'intersecting triangles detected', checked: false },
];

const GreenTick = () => (
  <svg width="34" height="32" viewBox="0 0 34 32" aria-hidden="true">
    <path d="M1 8C5 11 8 14 11 18C16 10 23 3 33 0C25 9 18 20 13 32H10C8 24 4 15 1 8Z" fill="#2a7a4a" />
    <path d="M4 12C7 15 9 18 11 22C14 15 19 9 25 6C20 13 15 21 12 30C10 24 7 17 4 12Z" fill="#1fa04a" />
  </svg>
);

const BlueDot = () => (
  <svg width="34" height="32" viewBox="0 0 34 32" aria-hidden="true">
    <circle cx="17" cy="17" r="4" fill="#2626c4" />
  </svg>
);

const FixWizard = () => (
  <DialogBack>
    <Dialog>
      <DialogBar>
        <svg width="29" height="28" viewBox="0 0 29 28" aria-hidden="true">
          <path d="M12 0 19 1 20 8 28 8 28 18 20 20 19 27 9 28 8 19 1 18 1 10 9 9Z" fill="#a00b10" />
          <path d="M10 2 17 2 17 10 26 10 25 17 17 18 17 27 9 27 9 18 1 18 1 11 10 10Z" fill="#f0121a" />
        </svg>
        <DialogTitle>{'Fix Wizard (Part: AV Designe 191 stl 2) > Diagnostics'}</DialogTitle>
        <DialogControls>
          <button aria-label="Minimize"><svg width="24" height="24"><path d="M2 13H22" stroke="#111" strokeWidth="2" /></svg></button>
          <button aria-label="Maximize" disabled><svg width="24" height="24"><rect x="3" y="3" width="18" height="18" rx="2" fill="none" stroke="#c4c8cf" strokeWidth="2" /></svg></button>
          <button aria-label="Close"><svg width="24" height="24"><path d="M2 2 22 22M22 2 2 22" stroke="#111" strokeWidth="2" /></svg></button>
        </DialogControls>
      </DialogBar>

      <DialogBody>
        <StepFrame>
          <StepList>
            <StepGrid>
              {steps.map((step, i) => (step ? (
                <StepButton key={step[0]}>
                  <StepIcon>{step[1]}</StepIcon>
                  <StepLabel $current={i === 0}>{step[0]}</StepLabel>
                </StepButton>
              ) : <StepRule key={i} />))}
            </StepGrid>
          </StepList>
        </StepFrame>

        <Settings>
          <PartRow>
            <PartLabel htmlFor="part">Current Part:</PartLabel>
            <SelectBox>
              <PartSelect id="part"><option>AV Designe 191 stl 2</option></PartSelect>
              <svg width="18" height="11"><path d="M1 1 9 9 17 1" fill="none" stroke="#777" strokeWidth="2" /></svg>
            </SelectBox>
            <NextButton disabled>Next</NextButton>
          </PartRow>

          <TabPage>
            <Group $top={12}>
              <GroupLegend>Advice</GroupLegend>
              <Advice>
                <AdviceText>
                  No more errors are detected. It seems that the part is ok.
                  <br />
                  Note that not all parameters were analysed.
                </AdviceText>
                <ScrollTrack>
                  <svg width="17" height="13"><path d="M8 0 17 13H0Z" fill="#a0a0a0" /></svg>
                  <svg width="17" height="13"><path d="M8 13 17 0H0Z" fill="#a0a0a0" /></svg>
                </ScrollTrack>
              </Advice>
            </Group>

            <Group $top={15}>
              <GroupLegend>Diagnostics</GroupLegend>
              <CheckLine>
                <Check type="checkbox" id="full" />
                <label htmlFor="full">Full Analysis</label>
              </CheckLine>
              <ResultList>
                {results.map(({ name, count, checked, nested }, i) => (
                  <ResultRow key={name} $nested={nested}>
                    {checked !== undefined && <Check type="checkbox" id={`result-${i}`} defaultChecked={checked} />}
                    <Mark>{count === undefined ? <BlueDot /> : <GreenTick />}</Mark>
                    <Count>{count}</Count>
                    <ResultName htmlFor={checked === undefined ? undefined : `result-${i}`}>{name}</ResultName>
                  </ResultRow>
                ))}
              </ResultList>
              <UpdateButton>
                <UpdateFocus>
                  <Lens size={34} handle="#e2b14e" />
                  Update
                </UpdateFocus>
              </UpdateButton>
            </Group>
          </TabPage>
        </Settings>
      </DialogBody>
    </Dialog>
  </DialogBack>
);

export default function App() {
  return (
    <>
      <GlobalStyle />
      <Desktop>
        <MagicsWindow />
        <FixWizard />
      </Desktop>
    </>
  );
}
